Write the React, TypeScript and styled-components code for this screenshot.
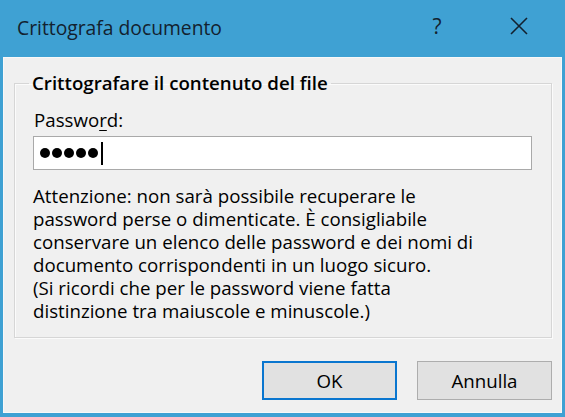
import React from "react";
import styled, { createGlobalStyle } from "styled-components";

const GlobalStyle = createGlobalStyle`
  html, body {
    margin: 0;
    padding: 0;
    background: #3fa1d3;
  }
  * {
    box-sizing: border-box;
  }
`;

const FONT = `"Open Sans", "Noto Sans", "Liberation Sans", sans-serif`;

const Frame = styled.div`
  width: 565px;
  height: 417px;
  background: #3fa1d3;
  padding: 0 3px 4px 3px;
  display: flex;
  flex-direction: column;
  font-family: ${FONT};
  color: #000;
`;

const TitleBar = styled.div`
  height: 57px;
  display: flex;
  align-items: center;
  padding-left: 14px;
  flex-shrink: 0;
`;

const Title = styled.div`
  flex: 1;
  font-size: 19.3px;
  color: #13212f;
  margin-top: -3px;
`;

const TitleButton = styled.div<{ $width: number; $right: number }>`
  width: ${(p) => p.$width}px;
  margin-right: ${(p) => p.$right}px;
  height: 40px;
  display: flex;
  align-items: center;
  justify-content: center;
  margin-top: -6px;
  color: #13212f;
  font-size: 21px;
`;

const Body = styled.div`
  flex: 1;
  background: #f0f0f0;
  border: 1px solid #f8f8f8;
  display: flex;
  flex-direction: column;
  padding: 14px 9px 12px 10px;
`;

const Group = styled.fieldset`
  margin: 0;
  border: 1px solid #d6d6d6;
  box-shadow: inset 1px 1px 0 #fbfbfb, 1px 1px 0 #fbfbfb;
  padding: 0 19px 15px 18px;
  display: flex;
  flex-direction: column;
`;

const Legend = styled.legend`
  font-size: 18.7px;
  font-weight: 600;
  line-height: 22px;
  padding: 0 3px;
  margin-left: -4px;
`;

const Label = styled.div`
  font-size: 18.7px;
  line-height: 22px;
  margin-top: 15px;
  padding-left: 1px;

  u {
    text-decoration-thickness: 1px;
    text-underline-offset: 3px;
  }
`;

const PasswordBox = styled.div`
  margin-top: 5px;
  height: 34px;
  background: #fff;
  border: 1px solid #a9a9a9;
  display: flex;
  align-items: center;
  padding-left: 6px;
  gap: 2px;
`;

const Dot = styled.span`
  width: 10px;
  height: 10px;
  border-radius: 50%;
  background: #000;
`;

const Caret = styled.span`
  width: 2px;
  height: 23px;
  background: #000;
  margin-left: 1px;
`;

const Notice = styled.p`
  margin: 14px 0 0 0;
  font-size: 18.7px;
  line-height: 23px;
`;

const Buttons = styled.div`
  margin-top: auto;
  display: flex;
  justify-content: flex-end;
  gap: 20px;
`;

const Button = styled.button<{ $default?: boolean }>`
  width: 135px;
  height: 39px;
  background: #e1e1e1;
  border: ${(p) => (p.$default ? "2px solid #0a76cf" : "1px solid #adadad")};
  font-family: ${FONT};
  font-size: 18.7px;
  color: #000;
  padding: 0;
`;

const CloseIcon = () => (
  <svg width="20" height="20" viewBox="0 0 20 20">
    <path d="M2 2 L18 18 M18 2 L2 18" stroke="#13212f" strokeWidth="1.6" fill="none" />
  </svg>
);

export default function App() {
  return (
    <>
      <GlobalStyle />
      <Frame>
        <TitleBar>
          <Title>Crittografa documento</Title>
          <TitleButton $width={50} $right={27}>
            ?
          </TitleButton>
          <TitleButton $width={60} $right={13}>
            <CloseIcon />
          </TitleButton>
        </TitleBar>
        <Body>
          <Group>
            <Legend>Crittografare il contenuto del file</Legend>
            <Label>
              Passwo<u>r</u>d:
            </Label>
            <PasswordBox>
              {[0, 1, 2, 3, 4].map((i) => (
                <Dot key={i} />
              ))}
              <Caret />
            </PasswordBox>
            <Notice>
              Attenzione: non sarà possibile recuperare le
              <br />
              password perse o dimenticate. È consigliabile
              <br />
              conservare un elenco delle password e dei nomi di
              <br />
              documento corrispondenti in un luogo sicuro.
              <br />
              (Si ricordi che per le password viene fatta
              <br />
              distinzione tra maiuscole e minuscole.)
            </Notice>
          </Group>
          <Buttons>
            <Button $default>OK</Button>
            <Button>Annulla</Button>
          </Buttons>
        </Body>
      </Frame>
    </>
  );
}
